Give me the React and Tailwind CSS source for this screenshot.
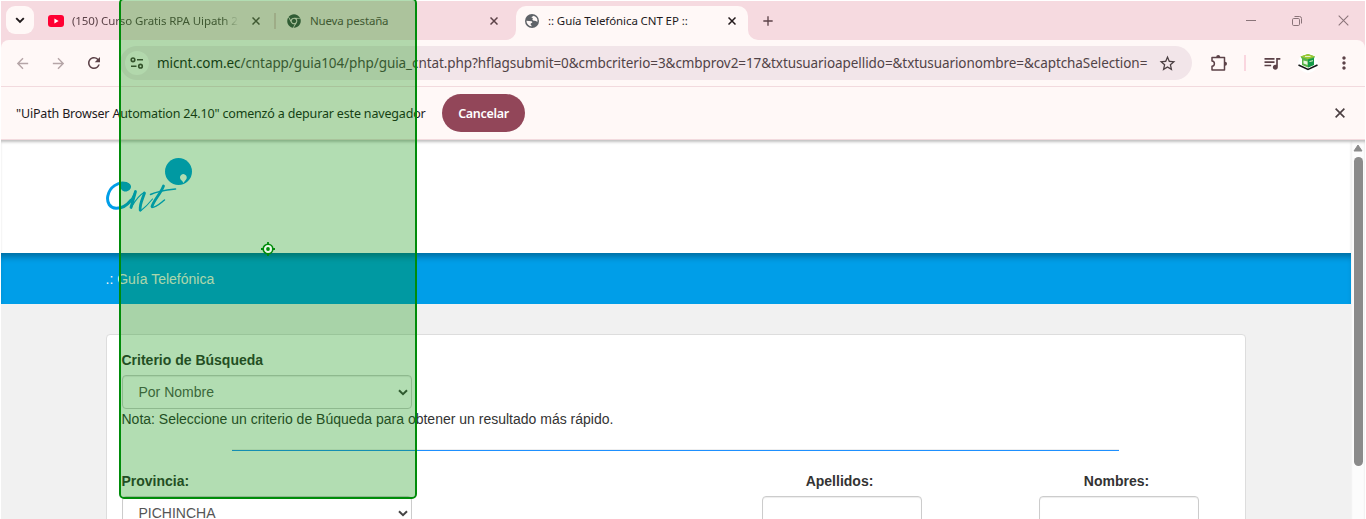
import React from "react";
import {
  MdArrowBack,
  MdArrowForward,
  MdRefresh,
  MdStarOutline,
  MdQueueMusic,
  MdMoreVert,
  MdAdd,
} from "react-icons/md";
import { FaChrome } from "react-icons/fa";

function Cross({ size = 8, width = 1.5, className = "" }) {
  return (
    <svg width={size} height={size} viewBox="0 0 8 8" className={"shrink-0 " + className}>
      <path d="M.5 .5 7.5 7.5M7.5 .5.5 7.5" stroke="currentColor" strokeWidth={width} fill="none" />
    </svg>
  );
}

function Globe() {
  return (
    <svg width="14" height="14" viewBox="0 0 14 14" className="shrink-0">
      <circle cx="7" cy="7" r="7" fill="#5f6368" />
      <path d="M1.400 6.800 6.500 7.200c1.200.3 1 1.600 0 1.800l-.8.500v1.300l1.400 1.500A5.600 5.600 0 0 1 1.400 6.800z" fill="#fff8f7" />
      <path d="M8.500 1.700a5.600 5.600 0 0 1 3.900 6.200c-.9-.4-1.300-1.200-2.500-1.200-1 0-1.800.2-2.300-.6-.5-.9.3-1.300.3-1.800s-1.500-.2-1.300-1.100c.2-.8 1.700-.4 1.900-1.500z" fill="#fff8f7" />
    </svg>
  );
}

function TabStrip() {
  return (
    <div className="flex h-[39px] bg-[#f6dae0] text-[11.5px] tracking-[-0.1px] text-[#5c4248]">
      <div className="mt-[5px] ml-[5px] flex h-7 w-7 shrink-0 items-center justify-center rounded-[9px] bg-[#fff8f7]">
        <svg width="10" height="7" viewBox="0 0 10 7">
          <path d="M1.2 1.2 5 5 8.8 1.2" stroke="#1f1a1b" strokeWidth="1.9" fill="none" />
        </svg>
      </div>

      <div className="flex h-[39px] w-[242px] shrink-0 items-center pl-[14px]">
        <svg width="16" height="12" viewBox="0 0 16 12" className="shrink-0">
          <rect width="16" height="12" rx="3" fill="#ff0033" />
          <path d="M6.4 3.5v5L10.6 6z" fill="#fff" />
        </svg>
        <div className="ml-2 w-[167px] whitespace-nowrap [mask-image:linear-gradient(to_right,#000_90%,transparent)]">
          (150) Curso Gratis RPA Uipath 2
        </div>
        <Cross className="ml-[13px]" />
        <div className="ml-[14px] h-4 w-[2px] bg-[#e3b9c2]" />
      </div>

      <div className="flex h-[39px] w-[240px] shrink-0 items-center pl-[11px]">
        <FaChrome size={14} color="#46474b" className="shrink-0" />
        <div className="ml-[9px] w-[180px] whitespace-nowrap tracking-[-0.17px]">Nueva pestaña</div>
        <Cross />
      </div>

      <div className="relative mt-[5px] flex h-[34px] w-[232px] shrink-0 items-center rounded-t-[10px] bg-[#fff8f7] pb-[5px] pl-[9px] text-[#231a1c]">
        <svg width="10" height="10" className="absolute bottom-0 -left-[10px]">
          <path d="M10 0A10 10 0 0 1 0 10H10z" fill="#fff8f7" />
        </svg>
        <svg width="10" height="10" className="absolute -right-[10px] bottom-0">
          <path d="M0 0A10 10 0 0 0 10 10H0z" fill="#fff8f7" />
        </svg>
        <Globe />
        <div className="ml-[9px] w-[180px] whitespace-nowrap">:: Guía Telefónica CNT EP ::</div>
        <Cross />
      </div>

      <div className="flex h-[39px] flex-1 items-center pl-3 text-[#5c4248]">
        <MdAdd size={16} />
        <div className="flex-1" />
        <svg width="10" height="10" viewBox="0 0 10 10" className="mr-[36px]">
          <path d="M0 4.5h10" stroke="#8a7479" fill="none" />
        </svg>
        <svg width="10" height="10" viewBox="0 0 10 10" className="mr-[36px]">
          <rect x=".5" y="2.5" width="7" height="7" rx="1.2" stroke="#8a7479" fill="none" />
          <path d="M2.5.5h5a2 2 0 0 1 2 2v5" stroke="#8a7479" fill="none" />
        </svg>
        <Cross size={11} width={0.75} className="mr-4 text-[#8a7479]" />
      </div>
    </div>
  );
}

function Toolbar() {
  return (
    <div className="bg-[#f6dae0]">
      <div className="flex h-[46px] items-center rounded-t-[8px] bg-[#fff8f7] text-[#5c4248]">
        <MdArrowBack size={17} color="#b5a5a7" className="ml-[13px] shrink-0" />
        <MdArrowForward size={17} color="#b5a5a7" className="ml-[19px] shrink-0" />
        <MdRefresh size={18} className="ml-[18px] shrink-0" />
        <div className="ml-[17px] flex h-[34px] w-[1072px] shrink-0 items-center rounded-full bg-[#f2e5e9] pl-[5px]">
          <div className="flex h-6 w-6 shrink-0 items-center justify-center rounded-full bg-[#fff8f7]">
            <svg width="14" height="12" viewBox="0 0 14 12" fill="none" stroke="#4b3a3e" strokeWidth="1.6">
              <circle cx="3" cy="2.8" r="1.8" />
              <path d="M7 2.8h6M1 9.2h5.500" />
              <circle cx="10.500" cy="9.200" r="1.8" />
            </svg>
          </div>
          <div className="ml-2 w-[992px] whitespace-nowrap text-[13.5px] leading-5 tracking-[-0.077px] text-[#514347]">
            <span className="text-[#231a1c]">micnt.com.ec</span>/cntapp/guia104/php/guia_cntat.php?hflagsubmit=0&amp;cmbcriterio=3&amp;cmbprov2=17&amp;txtusuarioapellido=&amp;txtusuarionombre=&amp;captchaSelection=
          </div>
          <MdStarOutline size={19} color="#4b3f42" className="ml-[9px] shrink-0" />
        </div>
        <svg width="18" height="18" viewBox="0 0 18 18" fill="none" className="ml-[18px] shrink-0">
          <path
            d="M2 3.500h12.500v12.500H2v-3.700c1.600-.2 2.400-1.200 2.400-2.600S3.600 7.300 2 7.100z"
            stroke="#5c4248"
            strokeWidth="1.500"
            strokeLinejoin="round"
          />
          <path d="M6.200 3a2 2 0 0 1 4 0zM15 7.700a2 2 0 0 1 0 4z" fill="#5c4248" />
        </svg>
        <div className="ml-4 h-4 w-[2px] bg-[#fad6df]" />
        <MdQueueMusic size={20} className="ml-4 shrink-0" />
        <svg width="22" height="20" viewBox="0 0 22 20" className="ml-[15px] shrink-0">
          <circle cx="11" cy="10" r="10" fill="#fff" />
          <path d="M1.500 12 11 16.500 20.500 12" stroke="#151515" strokeWidth="1.500" fill="none" />
          <path d="M3.500 3.500 11 1l7 2.500-1 2v6L11 14.500 5 12V6z" fill="#58b548" />
          <path d="M3.500 3.500 11 1l7 2.500L11 6z" fill="#a0c832" />
          <path d="M11 6.500l6-1.500v7L11 14.500z" fill="#159a48" />
          <path d="M6.500 7.500 10.500 8.500v3.500l-4-1.500z" fill="#e9f7df" />
          <path d="M8 3.500h5.500M12.500 8.500l3.500-.8" stroke="#dff2cd" strokeWidth="1" />
        </svg>
        <MdMoreVert size={20} className="ml-[15px] shrink-0" />
      </div>
    </div>
  );
}

function InfoBar() {
  return (
    <div className="flex h-[54px] items-center border-y border-[#f2dade] bg-[#fff8f7] pl-[15px] text-[12.5px] tracking-[-0.17px] text-[#231a1c]">
      <div className="w-[426px] pt-[2px] whitespace-nowrap">
        "UiPath Browser Automation 24.10" comenzó a depurar este navegador
      </div>
      <div className="flex h-[38px] w-[83px] shrink-0 items-center justify-center rounded-full bg-[#924659] pt-[2px] font-semibold tracking-[-0.3px] text-white">
        Cancelar
      </div>
      <Cross size={10} width={1.3} className="mr-5 ml-auto text-[#4b3f42]" />
    </div>
  );
}

function Logo() {
  return (
    <svg width="88" height="58" viewBox="0 0 88 58" fill="none" stroke="#009ee8" strokeLinecap="round" strokeLinejoin="round">
      <circle cx="72.500" cy="13.500" r="13.500" fill="#009ee8" stroke="none" />
      <path d="M74 19.800a3.400 3.400 0 1 1 5.500 2.400c-1 1-1.200 2.200-2.500 2.900.2-1.200-.5-1.800-1.400-2.600A3.400 3.400 0 0 1 74 19.800z" fill="#fff" stroke="none" />
      <path d="M20 25.500C12 23.500 3.500 29 1.800 38 .6 45 4 50 10 50.300c6 .2 11-3 15-8" strokeWidth="3" />
      <path d="M13 25.200c5-2.200 11-1.200 12 2.800.4 3-2.500 5.500-5.500 5.500-3.200 0-5.500-2.500-4.500-6z" fill="#009ee8" stroke="none" />
      <path d="M22 45c3-3 5.500-7 7-11" strokeWidth="1.200" />
      <path d="M29.500 33.500 25 49.500" strokeWidth="2.800" />
      <path d="M25.500 49c4-7 8-12 12.500-14.500" strokeWidth="1.200" />
      <path d="M38.500 35C37 40 33.500 46 34.200 52" strokeWidth="2.800" />
      <path d="M34.500 53c4-3 8-7 12-12" strokeWidth="1.100" />
      <path d="M57.500 28C54.500 36 48 42 46 48.500" strokeWidth="2.800" />
      <path d="M46 49.500c4 0 8-4 12.500-7.500" strokeWidth="1.500" />
      <path d="M44.500 36.500c7-3.500 16-4.500 25-5.500" strokeWidth="1.600" />
    </svg>
  );
}

function Select({ children }) {
  return (
    <div className="flex h-[34px] w-[290px] items-center justify-between rounded-[4px] border border-[#ccc] bg-white pr-[3px] pl-4 text-[#555] shadow-[inset_0_1px_1px_rgba(0,0,0,0.075)]">
      <span>{children}</span>
      <svg width="10" height="7" viewBox="0 0 10 7">
        <path d="M1 1.200 5 5.200 9 1.200" stroke="#444" strokeWidth="2" fill="none" />
      </svg>
    </div>
  );
}

function TextField({ label }) {
  return (
    <div className="w-40">
      <div className="mb-[5px] pr-1 text-center font-bold">{label}</div>
      <div className="h-[34px] rounded-[4px] border border-[#ccc] bg-white shadow-[inset_0_1px_1px_rgba(0,0,0,0.075)]" />
    </div>
  );
}

function Page() {
  return (
    <div className="h-[379px] w-[1350px] shrink-0 overflow-hidden bg-[#f1f1f1] font-['Liberation_Sans',Arial,sans-serif] text-[14px] leading-5 text-[#333]">
      <div className="h-[113px] bg-white pt-[18px] pl-[105px] shadow-[inset_0_3px_3px_-1px_rgba(0,0,0,0.25)]">
        <Logo />
      </div>
      <div className="flex h-[51px] items-center bg-[#009ee8] pl-[104.5px] text-[#f5f5f5] shadow-[inset_0_7px_6px_-3px_rgba(0,0,0,0.3)]">
        .: Guía Telefónica
      </div>
      <div className="mt-[30px] ml-[105px] h-[300px] w-[1140px] rounded-[4px] border border-[#ddd] bg-white pt-[15px] pl-[14.5px]">
        <div className="mb-[5px] font-bold">Criterio de Búsqueda</div>
        <Select>Por Nombre</Select>
        <div>Nota: Seleccione un criterio de Búqueda para obtener un resultado más rápido.</div>
        <div className="mt-5 ml-[110.5px] w-[887px]">
          <div className="h-px bg-[#eeeeee]" />
          <div className="h-px bg-[dodgerblue]" />
        </div>
        <div className="mt-5 flex">
          <div>
            <div className="mb-[5px] font-bold">Provincia:</div>
            <Select>PICHINCHA</Select>
          </div>
          <div className="ml-[350px]">
            <TextField label="Apellidos:" />
          </div>
          <div className="ml-[117px]">
            <TextField label="Nombres:" />
          </div>
        </div>
      </div>
    </div>
  );
}

function Scrollbar() {
  return (
    <div className="flex flex-1 flex-col items-center bg-[#fcfcfc] shadow-[inset_0_3px_3px_-1px_rgba(0,0,0,0.25)]">
      <svg width="10" height="8" viewBox="0 0 10 8" className="mt-[4px]">
        <path d="M5 1 9 7H1z" fill="#8b8b8b" stroke="#8b8b8b" strokeLinejoin="round" />
      </svg>
      <div className="mt-[5px] h-[309px] w-[9px] rounded-full bg-[#8b8b8b]" />
    </div>
  );
}

export default function App() {
  return (
    <div className="relative h-[519px] w-[1366px] overflow-hidden bg-white px-px pt-px font-['Noto_Sans','Open_Sans',sans-serif]">
      <TabStrip />
      <Toolbar />
      <InfoBar />
      <div className="flex">
        <Page />
        <Scrollbar />
      </div>

      {/* Highlighted selector region */}
      <div className="absolute -top-[2px] left-[119px] h-[501px] w-[298px] rounded-[5px] border-2 border-[#008c0a] bg-[rgba(0,142,0,0.3)] bg-clip-padding" />
      <svg width="14" height="14" viewBox="0 0 14 14" className="absolute top-[242px] left-[261px]" fill="none">
        <circle cx="7" cy="7" r="4.800" fill="#eaf8ea" stroke="#008c0a" strokeWidth="1.600" />
        <circle cx="7" cy="7" r="1.900" fill="#008c0a" />
        <path d="M7 0v2.500M7 11.500V14M0 7h2.500M11.500 7H14" stroke="#008c0a" strokeWidth="1.800" />
      </svg>
    </div>
  );
}
